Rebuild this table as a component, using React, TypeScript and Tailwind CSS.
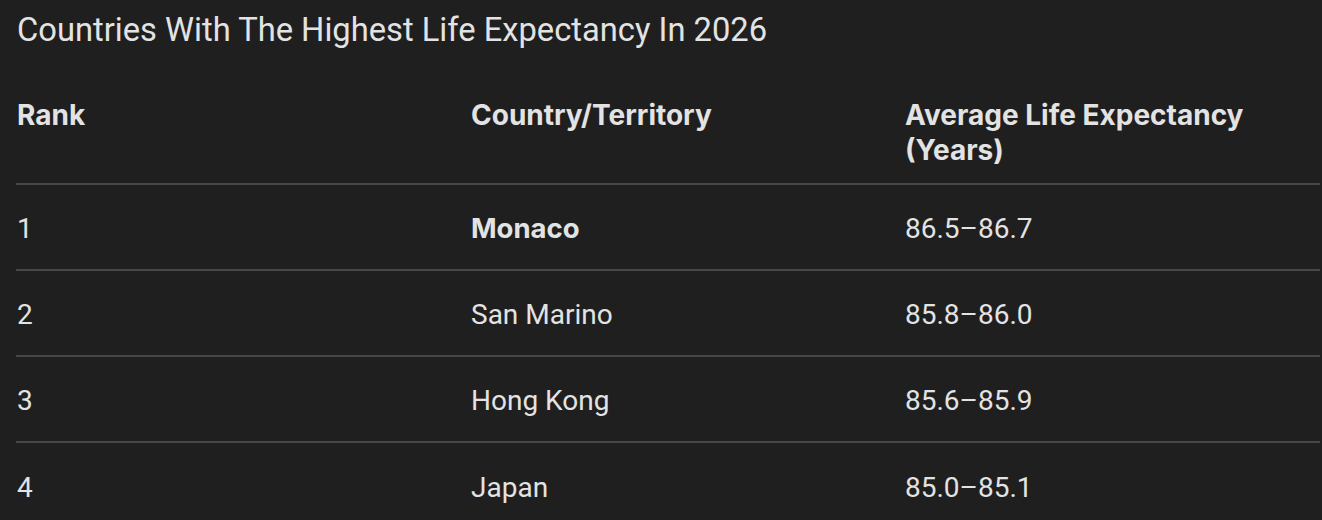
const rows = [
  { rank: "1", country: "Monaco", years: "86.5–86.7", bold: true },
  { rank: "2", country: "San Marino", years: "85.8–86.0" },
  { rank: "3", country: "Hong Kong", years: "85.6–85.9" },
  { rank: "4", country: "Japan", years: "85.0–85.1" },
];

const App = () => {
  return (
    <div className="min-h-[520px] w-[1322px] bg-[#1f1f1f] pl-4 pr-[2px] pt-[10px] text-[#e3e3e3] [font-family:Roboto,'Liberation_Sans',sans-serif]">
      <h1 className="pl-px text-[32.7px] leading-10 font-normal">
        Countries With The Highest Life Expectancy In 2026
      </h1>
      <table className="mt-[47px] w-full table-fixed border-collapse text-left">
        <colgroup>
          <col className="w-[455px]" />
          <col className="w-[434px]" />
          <col />
        </colgroup>
        <thead className="[font-family:Inter,Roboto,sans-serif]">
          <tr className="border-b-2 border-[#474747]">
            <th className="pb-[15px] pt-px pl-px pr-4 align-top text-[28px] leading-[35px] font-bold">Rank</th>
            <th className="pb-[15px] pt-px pr-4 align-top text-[28px] leading-[35px] font-bold">Country/Territory</th>
            <th className="pb-[15px] pt-px pr-14 align-top text-[28px] leading-[35px] font-bold">
              Average Life Expectancy (Years)
            </th>
          </tr>
        </thead>
        <tbody className="text-[28px]">
          {rows.map((row, idx) => (
            <tr
              key={row.rank}
              className={idx === rows.length - 1 ? "h-[86px]" : "h-[86px] border-b-2 border-[#474747]"}
            >
              <td className="pl-px pt-1 align-middle">{row.rank}</td>
              <td
                className={
                  row.bold
                    ? "pt-1 align-middle text-[27.5px] font-bold [font-family:Inter,Roboto,sans-serif]"
                    : "pt-1 align-middle"
                }
              >
                {row.country}
              </td>
              <td className="pt-1 align-middle">{row.years}</td>
            </tr>
          ))}
        </tbody>
      </table>
    </div>
  );
};

export default App;
